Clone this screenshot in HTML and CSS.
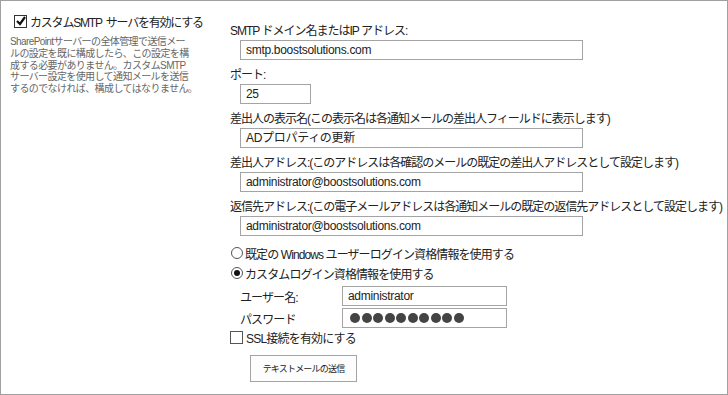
FILE: index.html
```html
<!DOCTYPE html>
<html lang="ja">
<head>
    <meta charset="UTF-8">
    <meta name="viewport" content="width=device-width, initial-scale=1.0">
    <title>SMTP設定</title>
    <link rel="stylesheet" href="styles.css">
</head>
<body>
    <div class="frame">
        <div class="side">
            <label class="enable">
                <span class="box checked">
                    <svg width="10" height="10" viewBox="0 0 10 10"><path d="M1 5 L4 8 L9 1" fill="none" stroke="#111" stroke-width="2.2"/></svg>
                </span>
                <span class="enable-text">カスタムSMTP サーバを有効にする</span>
            </label>
            <p class="note">SharePointサーバーの全体管理で送信メー<br>ルの設定を既に構成したら、この設定を構<br>成する必要がありません。カスタムSMTP<br>サーバー設定を使用して通知メールを送信<br>するのでなければ、構成してはなりません。</p>
        </div>

        <div class="main">
            <div class="field">
                <div class="label">SMTP ドメイン名またはIP アドレス:</div>
                <div class="input wide">smtp.boostsolutions.com</div>
            </div>
            <div class="field">
                <div class="label">ポート:</div>
                <div class="input port">25</div>
            </div>
            <div class="field">
                <div class="label">差出人の表示名(この表示名は各通知メールの差出人フィールドに表示します)</div>
                <div class="input wide">ADプロパティの更新</div>
            </div>
            <div class="field">
                <div class="label">差出人アドレス:(このアドレスは各確認のメールの既定の差出人アドレスとして設定します)</div>
                <div class="input wide">administrator@boostsolutions.com</div>
            </div>
            <div class="field">
                <div class="label">返信先アドレス:(この電子メールアドレスは各通知メールの既定の返信先アドレスとして設定します)</div>
                <div class="input wide">administrator@boostsolutions.com</div>
            </div>

            <div class="options">
                <div class="option"><span class="radio"></span>既定の Windows ユーザーログイン資格情報を使用する</div>
                <div class="option"><span class="radio on"></span>カスタムログイン資格情報を使用する</div>
            </div>

            <div class="creds">
                <div class="cred-row">
                    <span class="cred-label">ユーザー名:</span>
                    <div class="input cred">administrator</div>
                </div>
                <div class="cred-row">
                    <span class="cred-label">パスワード</span>
                    <div class="input cred dots">
                        <i></i><i></i><i></i><i></i><i></i><i></i><i></i><i></i><i></i><i></i>
                    </div>
                </div>
            </div>

            <label class="ssl"><span class="box"></span>SSL接続を有効にする</label>

            <button type="button" class="send">テキストメールの送信</button>
        </div>
    </div>
</body>
</html>
```

FILE: styles.css
```css
body {
    margin: 0;
    font-family: "Liberation Sans", "Noto Sans CJK JP", sans-serif;
    color: #222;
    background: #fff;
}
.frame {
    width: 726px;
    height: 393px;
    border: 1px solid #a0a0a0;
    display: flex;
}
.side {
    width: 215px;
    padding: 12px 0 0 13px;
    box-sizing: border-box;
}
.enable {
    display: flex;
    align-items: center;
    font-size: 12px;
    letter-spacing: -1.2px;
    gap: 3px;
    height: 16px;
    white-space: nowrap;
}
.enable-text {
    word-spacing: 2px;
}
.box {
    width: 11px;
    height: 11px;
    border: 1px solid #333;
    display: inline-flex;
    align-items: center;
    justify-content: center;
    background: #fff;
    flex: none;
}
.note {
    margin: 7px 0 0 -4px;
    font-size: 10px;
    line-height: 11.8px;
    color: #666;
    letter-spacing: -0.6px;
    white-space: nowrap;
}
.main {
    padding: 22px 0 0 14px;
    display: flex;
    flex-direction: column;
    align-items: flex-start;
}
.field {
    margin-bottom: 7px;
}
.label {
    font-size: 12px;
    line-height: 16px;
    letter-spacing: -1px;
    white-space: nowrap;
    margin-bottom: 1px;
}
.input {
    margin-left: 10px;
    height: 18px;
    border: 1px solid #a4a4a4;
    box-sizing: content-box;
    font-size: 12px;
    line-height: 18px;
    padding-left: 5px;
    letter-spacing: -0.3px;
    white-space: nowrap;
}
.wide {
    width: 336px;
}
.port {
    width: 64px;
}
.option {
    height: 20px;
    display: flex;
    align-items: center;
    font-size: 12px;
    letter-spacing: -0.9px;
    gap: 2px;
}
.radio {
    width: 10px;
    height: 10px;
    border: 1px solid #555;
    border-radius: 50%;
    margin-left: 1px;
    display: inline-flex;
    align-items: center;
    justify-content: center;
    flex: none;
}
.radio.on::after {
    content: "";
    width: 6px;
    height: 6px;
    border-radius: 50%;
    background: #111;
}
.creds {
    margin-top: 3px;
    display: flex;
    flex-direction: column;
    gap: 2px;
}
.cred-row {
    display: flex;
    align-items: center;
}
.cred-label {
    width: 112px;
    padding-left: 10px;
    box-sizing: border-box;
    font-size: 12px;
    letter-spacing: -0.9px;
}
.cred {
    margin-left: 0;
    width: 158px;
}
.dots {
    display: flex;
    align-items: center;
    gap: 1.5px;
    padding-left: 7px;
    width: 156px;
}
.dots i {
    width: 10px;
    height: 10px;
    border-radius: 50%;
    background: #444;
}
.ssl {
    margin-top: 2px;
    display: flex;
    align-items: center;
    gap: 3px;
    font-size: 12px;
    letter-spacing: -0.8px;
    height: 14px;
}
.ssl .box {
    border-color: #555;
}
.send {
    margin: 11px 0 0 20px;
    width: 107px;
    height: 27px;
    border: 1px solid #a4a4a4;
    background: #fdfdfd;
    font-family: "Noto Sans CJK JP", sans-serif;
    font-size: 9px;
    letter-spacing: -0.8px;
    color: #222;
    padding: 0;
}
```
